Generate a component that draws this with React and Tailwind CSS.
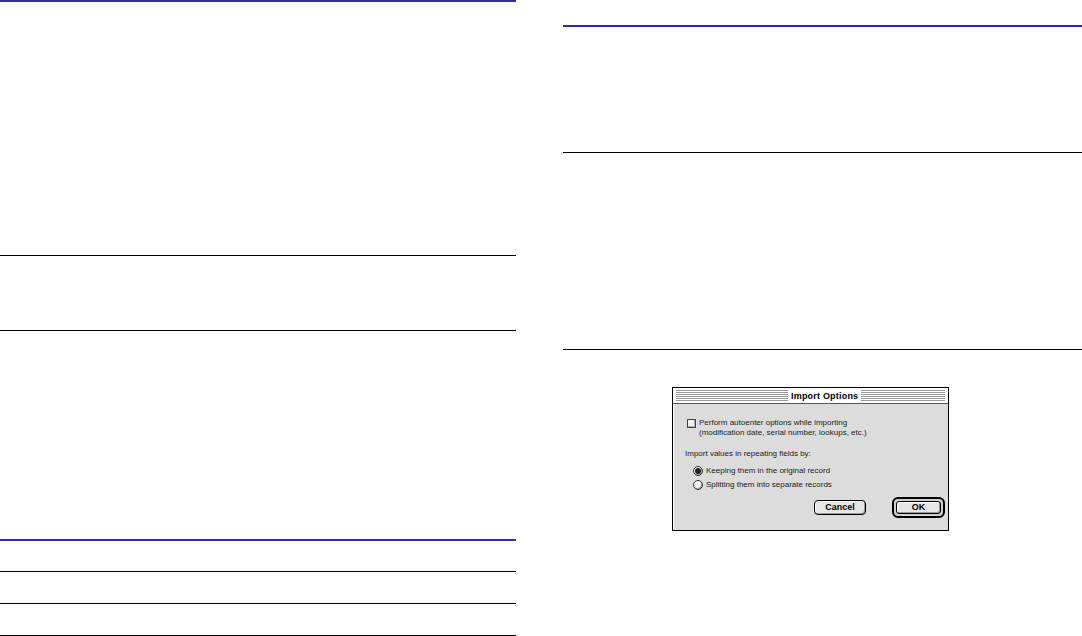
import React from 'react'

const font = { fontFamily: '"Liberation Sans", Arial, sans-serif' }

function Stripes({ className = '' }) {
  return (
    <div className={`flex flex-col justify-center gap-[1px] h-full py-[2px] ${className}`}>
      <div className="h-[1px] bg-[#9a9a9a]" />
      <div className="h-[1px] bg-[#9a9a9a]" />
      <div className="h-[1px] bg-[#9a9a9a]" />
      <div className="h-[1px] bg-[#9a9a9a]" />
      <div className="h-[1px] bg-[#9a9a9a]" />
      <div className="h-[1px] bg-[#9a9a9a]" />
    </div>
  )
}

function Radio({ checked }) {
  return (
    <span className="w-[10px] h-[10px] rounded-full border border-[#333] bg-[#f4f4f4] flex items-center justify-center shadow-[inset_-1px_-1px_0_#999]">
      {checked && <span className="w-[6px] h-[6px] rounded-full bg-[#222]" />}
    </span>
  )
}

function ImportDialog() {
  return (
    <div className="w-[277px] border border-black bg-[#dcdcdc] flex flex-col text-[8px] leading-[10px] text-[#1a1a1a]" style={font}>
      {/* title bar */}
      <div className="h-[16px] bg-white border-b border-[#555] flex items-center px-[3px] gap-[3px]">
        <Stripes className="w-[112px]" />
        <span className="font-bold text-[9px] tracking-[0.2px] text-black">Import Options</span>
        <Stripes className="flex-1" />
      </div>

      <div className="flex flex-col pl-[11px] pr-[3px] pt-[14px] pb-[12px] border-l border-white">
        <div className="flex items-center gap-[3px] pl-[2px]">
          <span className="w-[9px] h-[9px] border border-[#444] bg-[#eee] shadow-[inset_-1px_-1px_0_#aaa]" />
          <span>Perform autoenter options while importing</span>
        </div>
        <div className="pl-[14px]">(modification date, serial number, lookups, etc.)</div>

        <div className="mt-[11px]">Import values in repeating fields by:</div>

        <div className="mt-[7px] flex items-center gap-[3px] pl-[8px]">
          <Radio checked />
          <span>Keeping them in the original record</span>
        </div>
        <div className="mt-[4px] flex items-center gap-[3px] pl-[8px]">
          <Radio />
          <span>Splitting them into separate records</span>
        </div>

        <div className="mt-[7px] flex items-center justify-end gap-[26px]">
          <button className="w-[52px] h-[15px] rounded-[4px] border border-black bg-[#e6e6e6] shadow-[inset_-1px_-1px_0_#999,inset_1px_1px_0_#fff] text-[9px] font-bold leading-none text-black" style={font}>
            Cancel
          </button>
          <div className="w-[53px] h-[21px] rounded-[6px] border-2 border-black bg-[#cfcfcf] p-[2px] flex">
            <button className="flex-1 rounded-[3px] border border-black bg-[#e6e6e6] shadow-[inset_-1px_-1px_0_#999,inset_1px_1px_0_#fff] text-[9px] font-bold leading-none text-black" style={font}>
              OK
            </button>
          </div>
        </div>
      </div>
    </div>
  )
}

export default function App() {
  return (
    <div className="w-[1082px] h-[636px] bg-white flex overflow-hidden">
      {/* left column */}
      <div className="w-[516px] flex flex-col">
        <div className="h-[255px] border-t-2 border-[#2e3192]" />
        <div className="h-[75px] border-t border-black" />
        <div className="h-[209px] border-t border-black" />
        <div className="h-[32px] border-t-2 border-[#2e3192]" />
        <div className="h-[32px] border-t border-black" />
        <div className="h-[33px] border-t border-b border-black" />
      </div>

      {/* right column */}
      <div className="ml-[47px] flex-1 flex flex-col pt-[25px]">
        <div className="h-[127px] border-t-2 border-[#2e3192]" />
        <div className="h-[197px] border-t border-black" />
        <div className="border-t border-black pt-[37px] pl-[109px]">
          <ImportDialog />
        </div>
      </div>
    </div>
  )
}
